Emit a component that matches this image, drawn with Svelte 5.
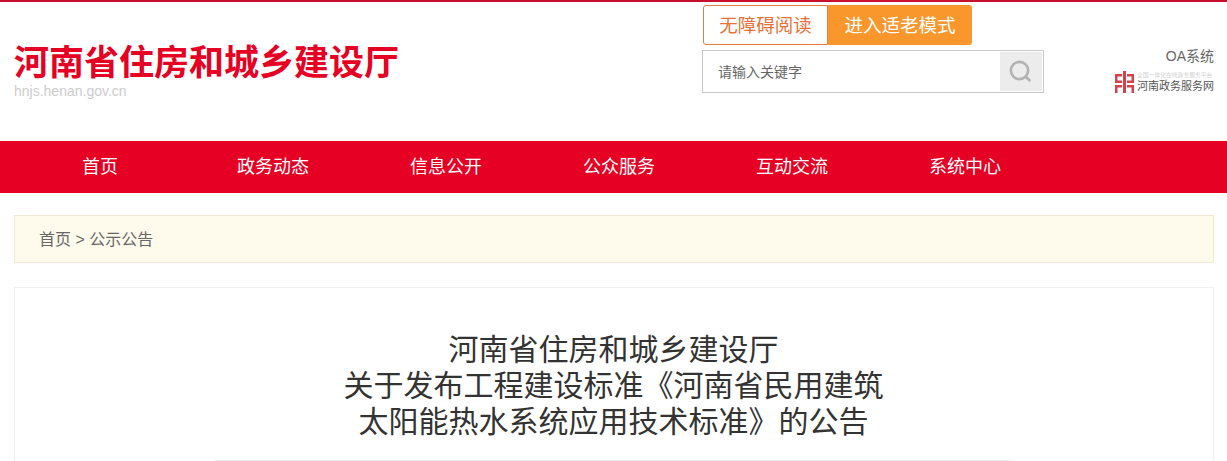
<script>
  const nav = ['首页', '政务动态', '信息公开', '公众服务', '互动交流', '系统中心'];
  const titleLines = [
    '河南省住房和城乡建设厅',
    '关于发布工程建设标准《河南省民用建筑',
    '太阳能热水系统应用技术标准》的公告'
  ];
</script>

<div class="page">
  <header class="header">
    <div class="brand">
      <div class="site-name">河南省住房和城乡建设厅</div>
      <div class="site-url">hnjs.henan.gov.cn</div>
    </div>
    <div class="tools">
      <div class="modes">
        <a class="mode plain" href="#a">无障碍阅读</a>
        <a class="mode solid" href="#b">进入适老模式</a>
      </div>
      <div class="search">
        <span class="placeholder">请输入关键字</span>
        <button class="search-btn" type="button" aria-label="搜索">
          <svg width="24" height="24" viewBox="0 0 24 24" fill="none" stroke="#b2b2b2">
            <circle cx="10.5" cy="10.5" r="8.6" stroke-width="2.6" />
            <path d="M16.8 16.8l3.6 3.4" stroke-width="2.8" stroke-linecap="round" />
          </svg>
        </button>
      </div>
    </div>
    <div class="links">
      <a class="oa" href="#c">OA系统</a>
      <div class="gov">
        <svg width="19" height="22" viewBox="0 0 19 22" fill="#d8404a">
          <path d="M8 0h3v22H8z" />
          <path d="M0 3h7v2.500H2.500v4H7V12H0z" />
          <path d="M12 3h7v9h-7V9.500h4.500v-4H12z" />
          <path d="M0 14h7v2.500H2.500V22H0z" />
          <path d="M12 14h7v8h-2.500v-5.500H12z" />
        </svg>
        <div class="gov-text">
          <span class="gov-sub">全国一体化在线政务服务平台</span>
          <span class="gov-name">河南政务服务网</span>
        </div>
      </div>
    </div>
  </header>

  <nav class="nav">
    {#each nav as item}
      <a class="nav-item" href="#n">{item}</a>
    {/each}
  </nav>

  <main class="main">
    <div class="crumb">首页 &gt; 公示公告</div>
    <article class="article">
      <h1 class="title">
        {#each titleLines as line}
          <div>{line}</div>
        {/each}
      </h1>
      <div class="rule"></div>
    </article>
  </main>
</div>

<style>
  :global(html), :global(body) {
    margin: 0;
    height: 461px;
    overflow: hidden;
    background: #fff;
  }

  .page {
    font-family: "Liberation Sans", "Noto Sans CJK SC", sans-serif;
    color: #333;
  }

  a {
    text-decoration: none;
    color: inherit;
  }

  .header {
    display: flex;
    height: 139px;
    padding: 0 13px 0 14px;
    border-top: 2px solid #c8102e;
    box-sizing: content-box;
  }

  .brand {
    width: 688px;
    padding-top: 40px;
  }

  .site-name {
    font-size: 35px;
    line-height: 42px;
    font-weight: 700;
    color: #e60023;
  }

  .site-url {
    margin-top: -1px;
    font-size: 14px;
    line-height: 16px;
    color: #ccc;
  }

  .tools {
    width: 342px;
    padding-top: 3px;
  }

  .modes {
    display: flex;
    height: 40px;
    margin-left: 1px;
  }

  .mode {
    display: flex;
    align-items: center;
    justify-content: center;
    box-sizing: border-box;
    padding-bottom: 2px;
    font-size: 18.5px;
  }

  .plain {
    width: 125px;
    border: 1px solid #e87b3e;
    border-radius: 3px 0 0 3px;
    color: #e8713a;
  }

  .solid {
    width: 144px;
    border-radius: 0 3px 3px 0;
    background: #fa972c;
    color: #fff;
  }

  .search {
    display: flex;
    align-items: center;
    justify-content: space-between;
    box-sizing: border-box;
    height: 43px;
    margin-top: 5px;
    padding: 1px 1px 1px 15px;
    border: 1px solid #c8c8c8;
  }

  .placeholder {
    margin-top: -2px;
    font-size: 14px;
    color: #666;
  }

  .search-btn {
    display: flex;
    align-items: center;
    justify-content: center;
    width: 42px;
    height: 39px;
    padding: 0;
    border: 0;
    background: #ececec;
  }

  .links {
    flex: 1;
    display: flex;
    flex-direction: column;
    align-items: flex-end;
    padding-top: 46px;
  }

  .oa {
    font-size: 14px;
    line-height: 16px;
    font-weight: 400;
    color: #666;
  }

  .gov {
    display: flex;
    align-items: center;
    gap: 3px;
    margin-top: 6px;
  }

  .gov-text {
    display: flex;
    flex-direction: column;
    gap: 1px;
    padding-top: 2px;
  }

  .gov-sub {
    font-size: 5.8px;
    line-height: 7px;
    white-space: nowrap;
    color: #d2d2d2;
  }

  .gov-name {
    font-size: 11px;
    line-height: 13px;
    color: #555;
  }

  .nav {
    display: flex;
    height: 52px;
    padding-left: 13.5px;
    background: #e60023;
  }

  .nav-item {
    width: 173px;
    font-size: 18px;
    line-height: 52px;
    text-align: center;
    color: #fff;
  }

  .main {
    padding: 22px 13px 0 14px;
  }

  .crumb {
    box-sizing: border-box;
    height: 48px;
    padding-left: 24px;
    border: 1px solid #efe9d6;
    background: #fefbec;
    font-size: 16px;
    line-height: 47px;
    color: #666;
  }

  .article {
    margin-top: 24px;
    padding-top: 44px;
    border: 1px solid #f0f0f0;
    border-bottom: 0;
  }

  .title {
    margin: 0;
    padding-right: 1px;
    font-size: 30px;
    line-height: 36px;
    font-weight: 400;
    text-align: center;
    color: #333;
  }

  .rule {
    width: 800px;
    margin: 20px auto 0;
    border-top: 1px solid #eee;
  }
</style>
